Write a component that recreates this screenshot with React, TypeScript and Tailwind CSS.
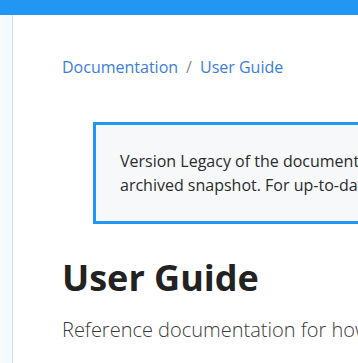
import React from 'react';

const App: React.FC = () => {
  return (
    <div className="flex h-screen flex-col overflow-hidden bg-white font-['Open_Sans',sans-serif]">
      <div className="h-[15px] shrink-0 bg-[#2196f3]" />
      <div className="flex min-h-0 flex-1">
        <aside className="w-[13px] shrink-0 border-r border-[#dcdcdc] bg-[#f5faff]" />
        <main className="min-w-0 flex-1 pl-[49px] pt-[40px]">
          <div className="w-[760px]">
            <nav className="flex items-center text-base leading-6 text-[#3b7ddd]">
              <a href="#">Documentation</a>
              <span className="mx-2 text-[#8a8a8a]">/</span>
              <a href="#">User Guide</a>
            </nav>

            <div className="ml-[31px] mt-[43px] border-[3px] border-[#2196f3] bg-[#f6f8fa] p-6 text-base leading-6 text-[#2b2b2b]">
              Version Legacy of the documentation is an
              <br />
              archived snapshot. For up-to-date information, see the latest version.
            </div>

            <h1 className="mt-[30px] text-[36px] font-bold leading-[48px] text-[#222]">User Guide</h1>
            <p className="mt-3 text-[20px] font-light leading-8 text-[#3a3a3a]">
              Reference documentation for how to use the product.
            </p>
          </div>
        </main>
      </div>
    </div>
  );
};

export default App;
